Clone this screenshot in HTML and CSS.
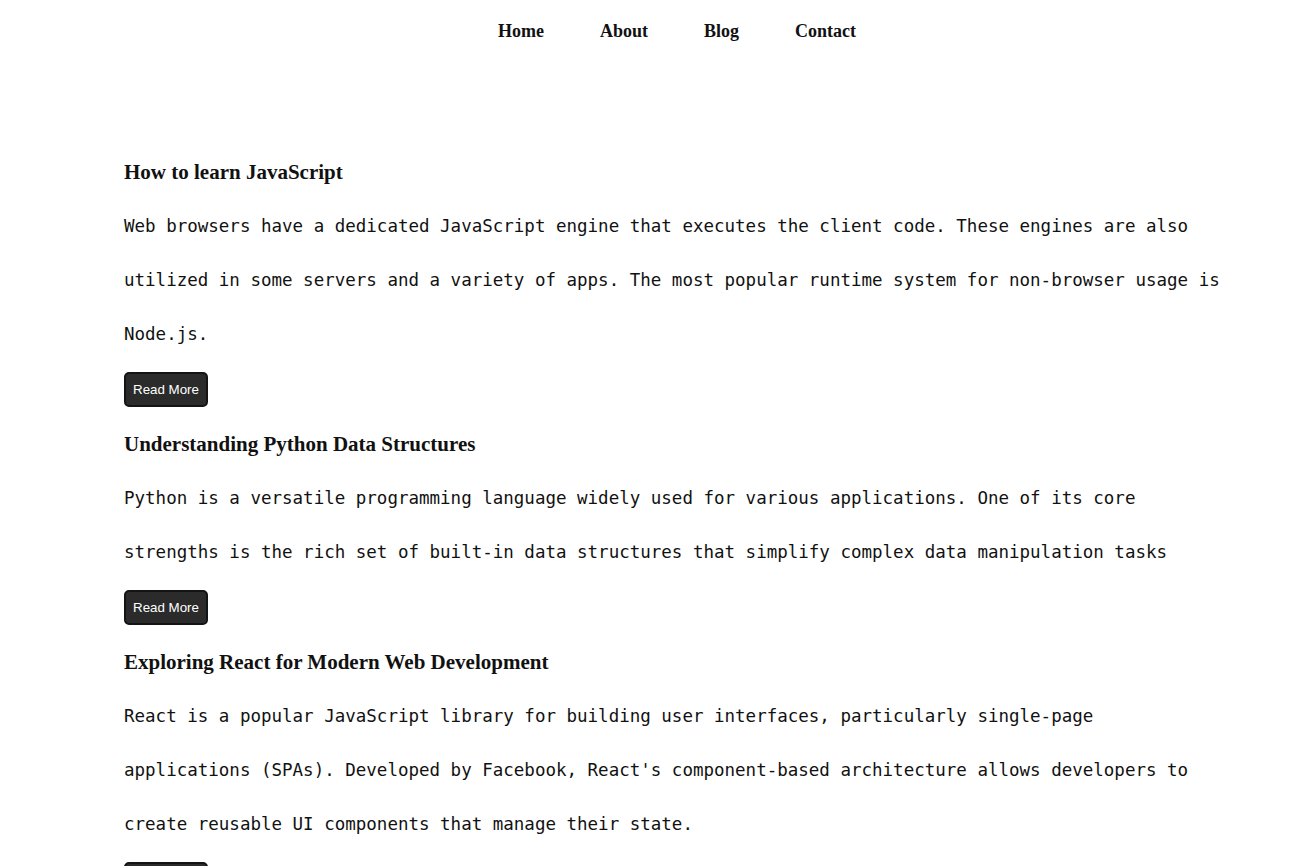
FILE: index.html
```html
<!DOCTYPE html>
<html lang="en">
<head>
<meta charset="utf-8">
<title>Blog</title>
<link rel="stylesheet" href="styles.css">
</head>
<body>
<nav class="nav">
  <a class="nav-link" href="#">Home</a>
  <a class="nav-link" href="#">About</a>
  <a class="nav-link" href="#">Blog</a>
  <a class="nav-link" href="#">Contact</a>
</nav>
<main class="posts">
  <article class="post">
    <h2 class="post-title">How to learn JavaScript</h2>
    <p class="post-text">Web browsers have a dedicated JavaScript engine that executes the client code. These engines are also utilized in some servers and a variety of apps. The most popular runtime system for non-browser usage is Node.js.</p>
    <button class="btn">Read More</button>
  </article>
  <article class="post">
    <h2 class="post-title">Understanding Python Data Structures</h2>
    <p class="post-text">Python is a versatile programming language widely used for various applications. One of its core strengths is the rich set of built-in data structures that simplify complex data manipulation tasks</p>
    <button class="btn">Read More</button>
  </article>
  <article class="post">
    <h2 class="post-title">Exploring React for Modern Web Development</h2>
    <p class="post-text">React is a popular JavaScript library for building user interfaces, particularly single-page applications (SPAs). Developed by Facebook, React's component-based architecture allows developers to create reusable UI components that manage their state.</p>
    <button class="btn">Read More</button>
  </article>
</main>
</body>
</html>
```
FILE: styles.css
```css
html, body {
  margin: 0;
  padding: 0;
  background: #ffffff;
  color: #111111;
}
body {
  font-family: "Liberation Serif", "Times New Roman", serif;
}
.nav {
  display: flex;
  justify-content: center;
  padding: 20px 0 0 1px;
  height: 40px;
  box-sizing: content-box;
}
.nav-link {
  font-size: 18px;
  font-weight: bold;
  color: #111111;
  text-decoration: none;
  line-height: 22px;
  padding-left: 56px;
}
.posts {
  display: flex;
  flex-direction: column;
  gap: 25px;
  padding: 100px 0 40px 124px;
  width: 1100px;
}
.post {
  display: flex;
  flex-direction: column;
  align-items: flex-start;
}
.post-title {
  font-size: 21px;
  font-weight: bold;
  line-height: 24px;
  margin: 0 0 15px 0;
}
.post-text {
  font-family: "DejaVu Sans Mono", monospace;
  font-size: 17.5px;
  line-height: 54px;
  margin: 0;
}
.btn {
  margin-top: 11px;
  font-family: "Liberation Sans", Arial, sans-serif;
  font-size: 13.33px;
  line-height: 15px;
  white-space: nowrap;
  color: #ffffff;
  background: #2b2b2b;
  border: 2px solid #141414;
  border-radius: 5px;
  padding: 0 7px;
  height: 35px;
  cursor: pointer;
}
```
